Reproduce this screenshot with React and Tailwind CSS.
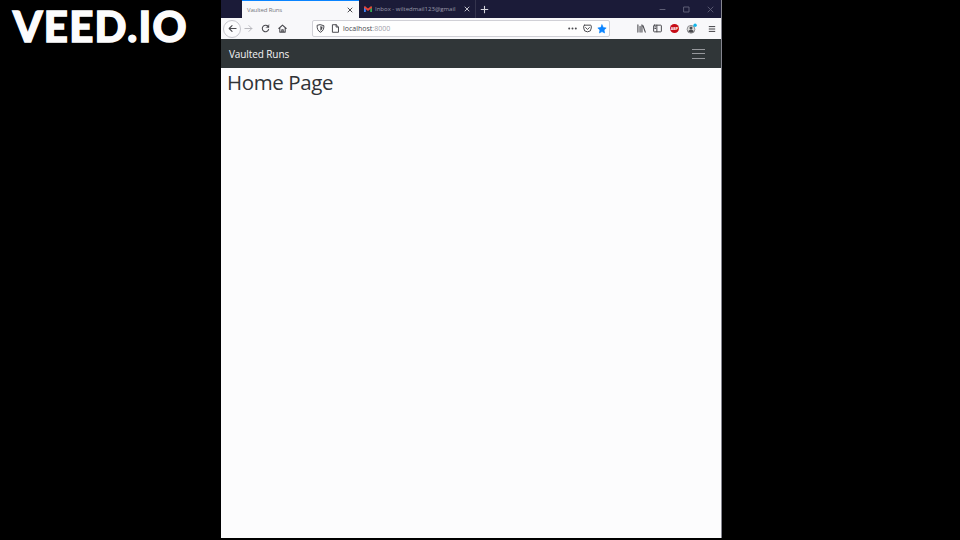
import React from "react";

function Icon({ children, className = "", size = 10, box = "0 0 10 10" }) {
  return (
    <svg
      width={size}
      height={size}
      viewBox={box}
      fill="none"
      stroke="currentColor"
      strokeWidth="1.1"
      strokeLinecap="round"
      strokeLinejoin="round"
      className={"block shrink-0 " + className}
    >
      {children}
    </svg>
  );
}

const Close = ({ className }) => (
  <Icon size={6} box="0 0 6 6" className={className}>
    <path d="M1 1l4 4M5 1L1 5" strokeWidth="0.9" />
  </Icon>
);

function TabBar() {
  return (
    <div className="flex h-[18px] shrink-0 bg-[#1b1b38] pl-[21px]">
      <div className="flex h-full w-[117px] items-center border-t border-[#0a84ff] bg-[#f8f8fa] pl-[5px] pr-[6px]">
        <span className="whitespace-nowrap text-[6px] leading-none tracking-[-0.15px] text-[#77777d]">Vaulted Runs</span>
        <Close className="ml-auto text-[#38383d]" />
      </div>
      <div className="flex h-full w-[117px] items-center border-r border-[#34344d] pl-[5px] pr-[5px]">
        <svg width="8" height="6" viewBox="0 0 8 6" className="block shrink-0">
          <path d="M0 .8h1.8V6H0z" fill="#4285f4" />
          <path d="M6.2.8H8V6H6.2z" fill="#34a853" />
          <path d="M0 .8L1 .2l3 2.4L7 .2l1 .6v1L4 5 0 1.8z" fill="#ea4335" />
        </svg>
        <span className="ml-[3px] whitespace-nowrap text-[6px] leading-none text-[#9b9bac]">
          Inbox - wiltedmail123@gmail
        </span>
        <Close className="ml-auto text-[#d5d5dc]" />
      </div>
      <div className="flex items-center pl-[4px] text-[#d5d5dc]">
        <Icon size={9} box="0 0 9 9"><path d="M4.5 1.2v6.6M1.2 4.5h6.6" /></Icon>
      </div>
      <div className="ml-auto flex items-center gap-[17px] pr-[7px] text-[#66667d]">
        <Icon size={7} box="0 0 7 7"><path d="M1 3.5h5" strokeWidth="0.9" /></Icon>
        <Icon size={7} box="0 0 7 7"><path d="M1 1h5v5H1z" strokeWidth="0.9" /></Icon>
        <Icon size={7} box="0 0 7 7"><path d="M1 1l5 5M6 1L1 6" strokeWidth="0.8" /></Icon>
      </div>
    </div>
  );
}

function Toolbar() {
  return (
    <div className="flex h-[21px] shrink-0 items-center bg-[#f8f8fa] text-[#4a4a4f]">
      <div className="ml-[2px] flex h-[18px] w-[18px] items-center justify-center rounded-full border border-[#c6c6cc] bg-[#fcfcfd]">
        <Icon size={9}><path d="M9 5H1.4M4.5 1.8L1.3 5l3.2 3.2" strokeWidth="1.2" /></Icon>
      </div>
      <Icon size={9} className="ml-[3px] text-[#b7b7bc]"><path d="M1 5h7.6M5.5 1.8L8.7 5 5.5 8.2" /></Icon>
      <Icon size={9} className="ml-[8px]">
        <path d="M8.2 3.2A3.6 3.6 0 1 0 8.5 6" strokeWidth="1.2" />
        <path d="M8.9 1v3H5.9z" fill="currentColor" strokeWidth="0.4" />
      </Icon>
      <Icon size={9} className="ml-[8px]">
        <path d="M.9 5L5 1.2 9.1 5M2 4.5V9h6V4.5M4.2 9V6.4h1.6V9" strokeWidth="1.2" />
      </Icon>
      <div className="ml-[25px] flex h-[17px] w-[298px] items-center rounded-[2px] border border-[#d0d0d6] bg-[#fefefe] pl-[3px] pr-[2px]">
        <Icon size={9}>
          <path d="M5 .8l3.8 1.1c0 3.6-.9 5.8-3.8 7.3C2.1 7.7 1.2 5.5 1.2 1.9z" />
          <path d="M5 2.6v4.8C6.4 6.3 7 5.1 7.1 3.2z" fill="currentColor" strokeWidth="0.3" />
        </Icon>
        <Icon size={9} className="ml-[6px]"><path d="M2 .8h3.7L8.3 3.4V9.2H2zM5.7 .8v2.6h2.6" /></Icon>
        <span className="ml-[3px] whitespace-nowrap text-[7px] leading-none text-[#4a4a50]">
          localhost<span className="text-[#a0a0aa]">:8000</span>
        </span>
        <svg width="9" height="3" viewBox="0 0 9 3" fill="currentColor" className="ml-auto block shrink-0">
          <circle cx="1.2" cy="1.5" r="1" />
          <circle cx="4.5" cy="1.5" r="1" />
          <circle cx="7.8" cy="1.5" r="1" />
        </svg>
        <Icon size={9} className="ml-[6px]">
          <path d="M1.8 1.3h6.4a1 1 0 0 1 1 1v2.2a4.2 4.2 0 0 1-8.4 0V2.3a1 1 0 0 1 1-1z" />
          <path d="M2.9 4L5 6l2.1-2" />
        </Icon>
        <Icon className="ml-[5px] text-[#0a84ff]">
          <path d="M5 .8l1.3 2.7 2.9.4-2.1 2.1.5 3L5 7.6 2.4 9l.5-3L.8 3.9l2.9-.4z" fill="currentColor" strokeWidth="0.6" />
        </Icon>
      </div>
      <div className="ml-auto flex items-center pr-[5px]">
        <Icon size={9}><path d="M1 1v8M3.4 2.5V9M5.5 1v8M6.7 2L9.2 9" strokeWidth="1.2" /></Icon>
        <Icon size={9} className="ml-[7px]"><path d="M1.5 1.3h7a.8 .8 0 0 1 .8 .8v5.8a.8 .8 0 0 1-.8 .8h-7a.8 .8 0 0 1-.8-.8V2.1a.8 .8 0 0 1 .8-.8zM4.3 1.3v7.4M2 3.2h1M2 5h1" /></Icon>
        <div className="ml-[8px] flex h-[9px] w-[9px] items-center justify-center rounded-full bg-[#c70d17]">
          <span className="text-[3.7px] font-bold leading-none text-white">ABP</span>
        </div>
        <svg width="12" height="12" viewBox="0 0 12 12" className="ml-[7px] block">
          <circle cx="5" cy="6.3" r="3.9" fill="#dededc" stroke="#77777c" strokeWidth=".8" />
          <circle cx="5" cy="5.1" r="1.5" fill="#4a4a4f" />
          <path d="M2.3 8.6c.3-2.4 5.1-2.4 5.4 0-1.3 1.6-4.1 1.6-5.4 0z" fill="#4a4a4f" />
          <circle cx="9.1" cy="2.3" r="1.7" fill="#12b5e8" />
        </svg>
        <Icon size={8} className="ml-[10px] text-[#38383d]"><path d="M1.5 2h7M1.5 5h7M1.5 8h7" strokeWidth="1.2" /></Icon>
      </div>
    </div>
  );
}

export default function App() {
  return (
    <main className="flex h-[540px] w-[960px] overflow-hidden bg-black font-['Open_Sans','Noto_Sans',sans-serif]">
      <div className="w-[221px] shrink-0 pl-[13px] pt-[3px]">
        <span className="block whitespace-nowrap font-['Lato',sans-serif] text-[42px] font-black leading-[46px] tracking-[1.3px] text-[#fcfcfd] [-webkit-text-stroke:1.4px_#fcfcfd]">VEED.IO</span>
      </div>
      <div className="flex h-[538px] w-[501px] shrink-0 flex-col border-r border-[#85858f] bg-[#fcfcfd]">
        <TabBar />
        <Toolbar />
        <nav className="flex h-[29px] shrink-0 items-center justify-between bg-[#303638] pl-[8px] pr-[16px] pt-px">
          <span className="whitespace-nowrap text-[10px] leading-none tracking-[-0.1px] text-[#f4f4f6]">Vaulted Runs</span>
          <svg width="13" height="12" viewBox="0 0 13 12" stroke="#96989c" strokeWidth="1" className="block">
            <path d="M0 1.5h13M0 5.5h13M0 10.5h13" />
          </svg>
        </nav>
        <h1 className="whitespace-nowrap pl-[6px] text-[20.5px] leading-[29px] tracking-[-0.4px] text-[#303337]">Home Page</h1>
      </div>
    </main>
  );
}
